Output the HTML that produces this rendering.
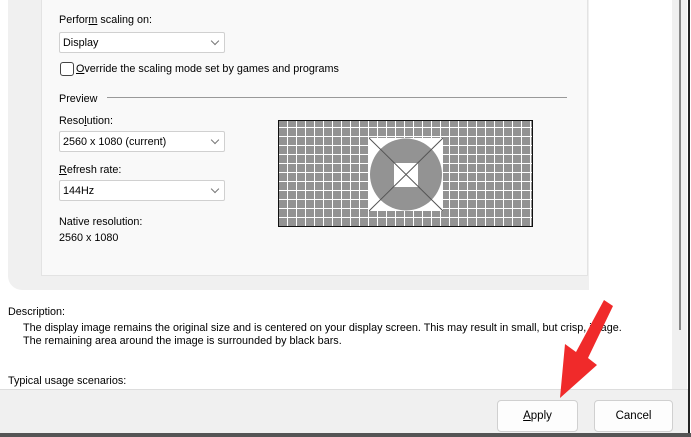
<!DOCTYPE html>
<html><head><meta charset="utf-8"><style>
body{margin:0;width:691px;height:437px;position:relative;overflow:hidden;background:#fff;font-family:"Liberation Sans",sans-serif;font-size:10.8px;color:#000}
.a{position:absolute}
.dd{position:absolute;left:59px;width:164px;height:19px;border:1px solid #d0d0d0;border-radius:2px;background:#fff}
.dd span{position:absolute;left:3px;top:4px}
.dd i{position:absolute;right:6px;top:5px;width:5px;height:5px;border-right:1px solid #777;border-bottom:1px solid #777;transform:rotate(45deg)}
.btn{position:absolute;top:400px;height:30px;border:1px solid #d0d0d0;border-radius:4px;background:#fdfdfd;text-align:center;line-height:30px;font-size:11.5px}
</style></head><body>
<div class="a" style="left:8px;top:0;width:581px;height:290px;background:#f0f0f0;border-bottom-left-radius:14px"></div>
<div class="a" style="left:41px;top:0;width:545px;height:275px;background:#f9f9f9;border:1px solid #e3e3e3;border-top:none"></div>
<div class="a" style="left:672px;top:0;width:15px;height:390px;background:#f0f0f0"></div>
<div class="a" style="left:679px;top:0;width:2px;height:330px;background:#888"></div>
<div class="a" style="left:688px;top:0;width:2px;height:437px;background:#222"></div>
<div class="a" style="left:0;top:389px;width:688px;height:44px;background:#f0f0f0;border-top:1px solid #ddd"></div>
<div class="a" style="left:0;top:433px;width:691px;height:4px;background:#555"></div>

<div class="a" style="left:59px;top:14px">Perfor<u>m</u> scaling on:</div>
<div class="dd" style="top:32px"><span>Display</span><i></i></div>
<div class="a" style="left:60px;top:62px;width:12px;height:12px;border:1px solid #444;border-radius:3px;background:#fff"></div>
<div class="a" style="left:76px;top:63px"><u>O</u>verride the scaling mode set by games and programs</div>
<div class="a" style="left:59px;top:93px">Preview</div>
<div class="a" style="left:107px;top:97px;width:460px;height:1px;background:#999"></div>
<div class="a" style="left:59px;top:115px">Reso<u>l</u>ution:</div>
<div class="dd" style="top:131px"><span>2560 x 1080 (current)</span><i></i></div>
<div class="a" style="left:59px;top:164px"><u>R</u>efresh rate:</div>
<div class="dd" style="top:180px"><span>144Hz</span><i></i></div>
<div class="a" style="left:59px;top:216px">Native resolution:</div>
<div class="a" style="left:59px;top:232px">2560 x 1080</div>

<div class="a" style="left:278px;top:120px;width:253px;height:105px;border:1px solid #111;background-color:#939393;background-image:repeating-linear-gradient(90deg,transparent 0 8px,#fff 8px 9px),repeating-linear-gradient(0deg,transparent 0 8px,#fff 8px 9px)"></div>
<svg class="a" style="left:369px;top:138px" width="74" height="73">
<rect width="74" height="73" fill="#fff"/><circle cx="37" cy="36.5" r="36" fill="#939393"/>
<rect x="25" y="25" width="24" height="24" fill="#fff"/>
<path d="M0 0L74 73M74 0L0 73" stroke="#555" stroke-width="1"/></svg>

<div class="a" style="left:8px;top:306px">Description:</div>
<div class="a" style="left:23px;top:322px">The display image remains the original size and is centered on your display screen. This may result in small, but crisp, image.</div>
<div class="a" style="left:23px;top:335px">The remaining area around the image is surrounded by black bars.</div>
<div class="a" style="left:8px;top:375px">Typical usage scenarios:</div>

<div class="btn" style="left:497px;width:79px"><u>A</u>pply</div>
<div class="btn" style="left:594px;width:77px">Cancel</div>

<svg class="a" style="left:0;top:0" width="691" height="437">
<polygon points="604,300 613,306 588,358 597,365 560,398 565,344 576,352" fill="#f02a2a"/>
</svg>
</body></html>
